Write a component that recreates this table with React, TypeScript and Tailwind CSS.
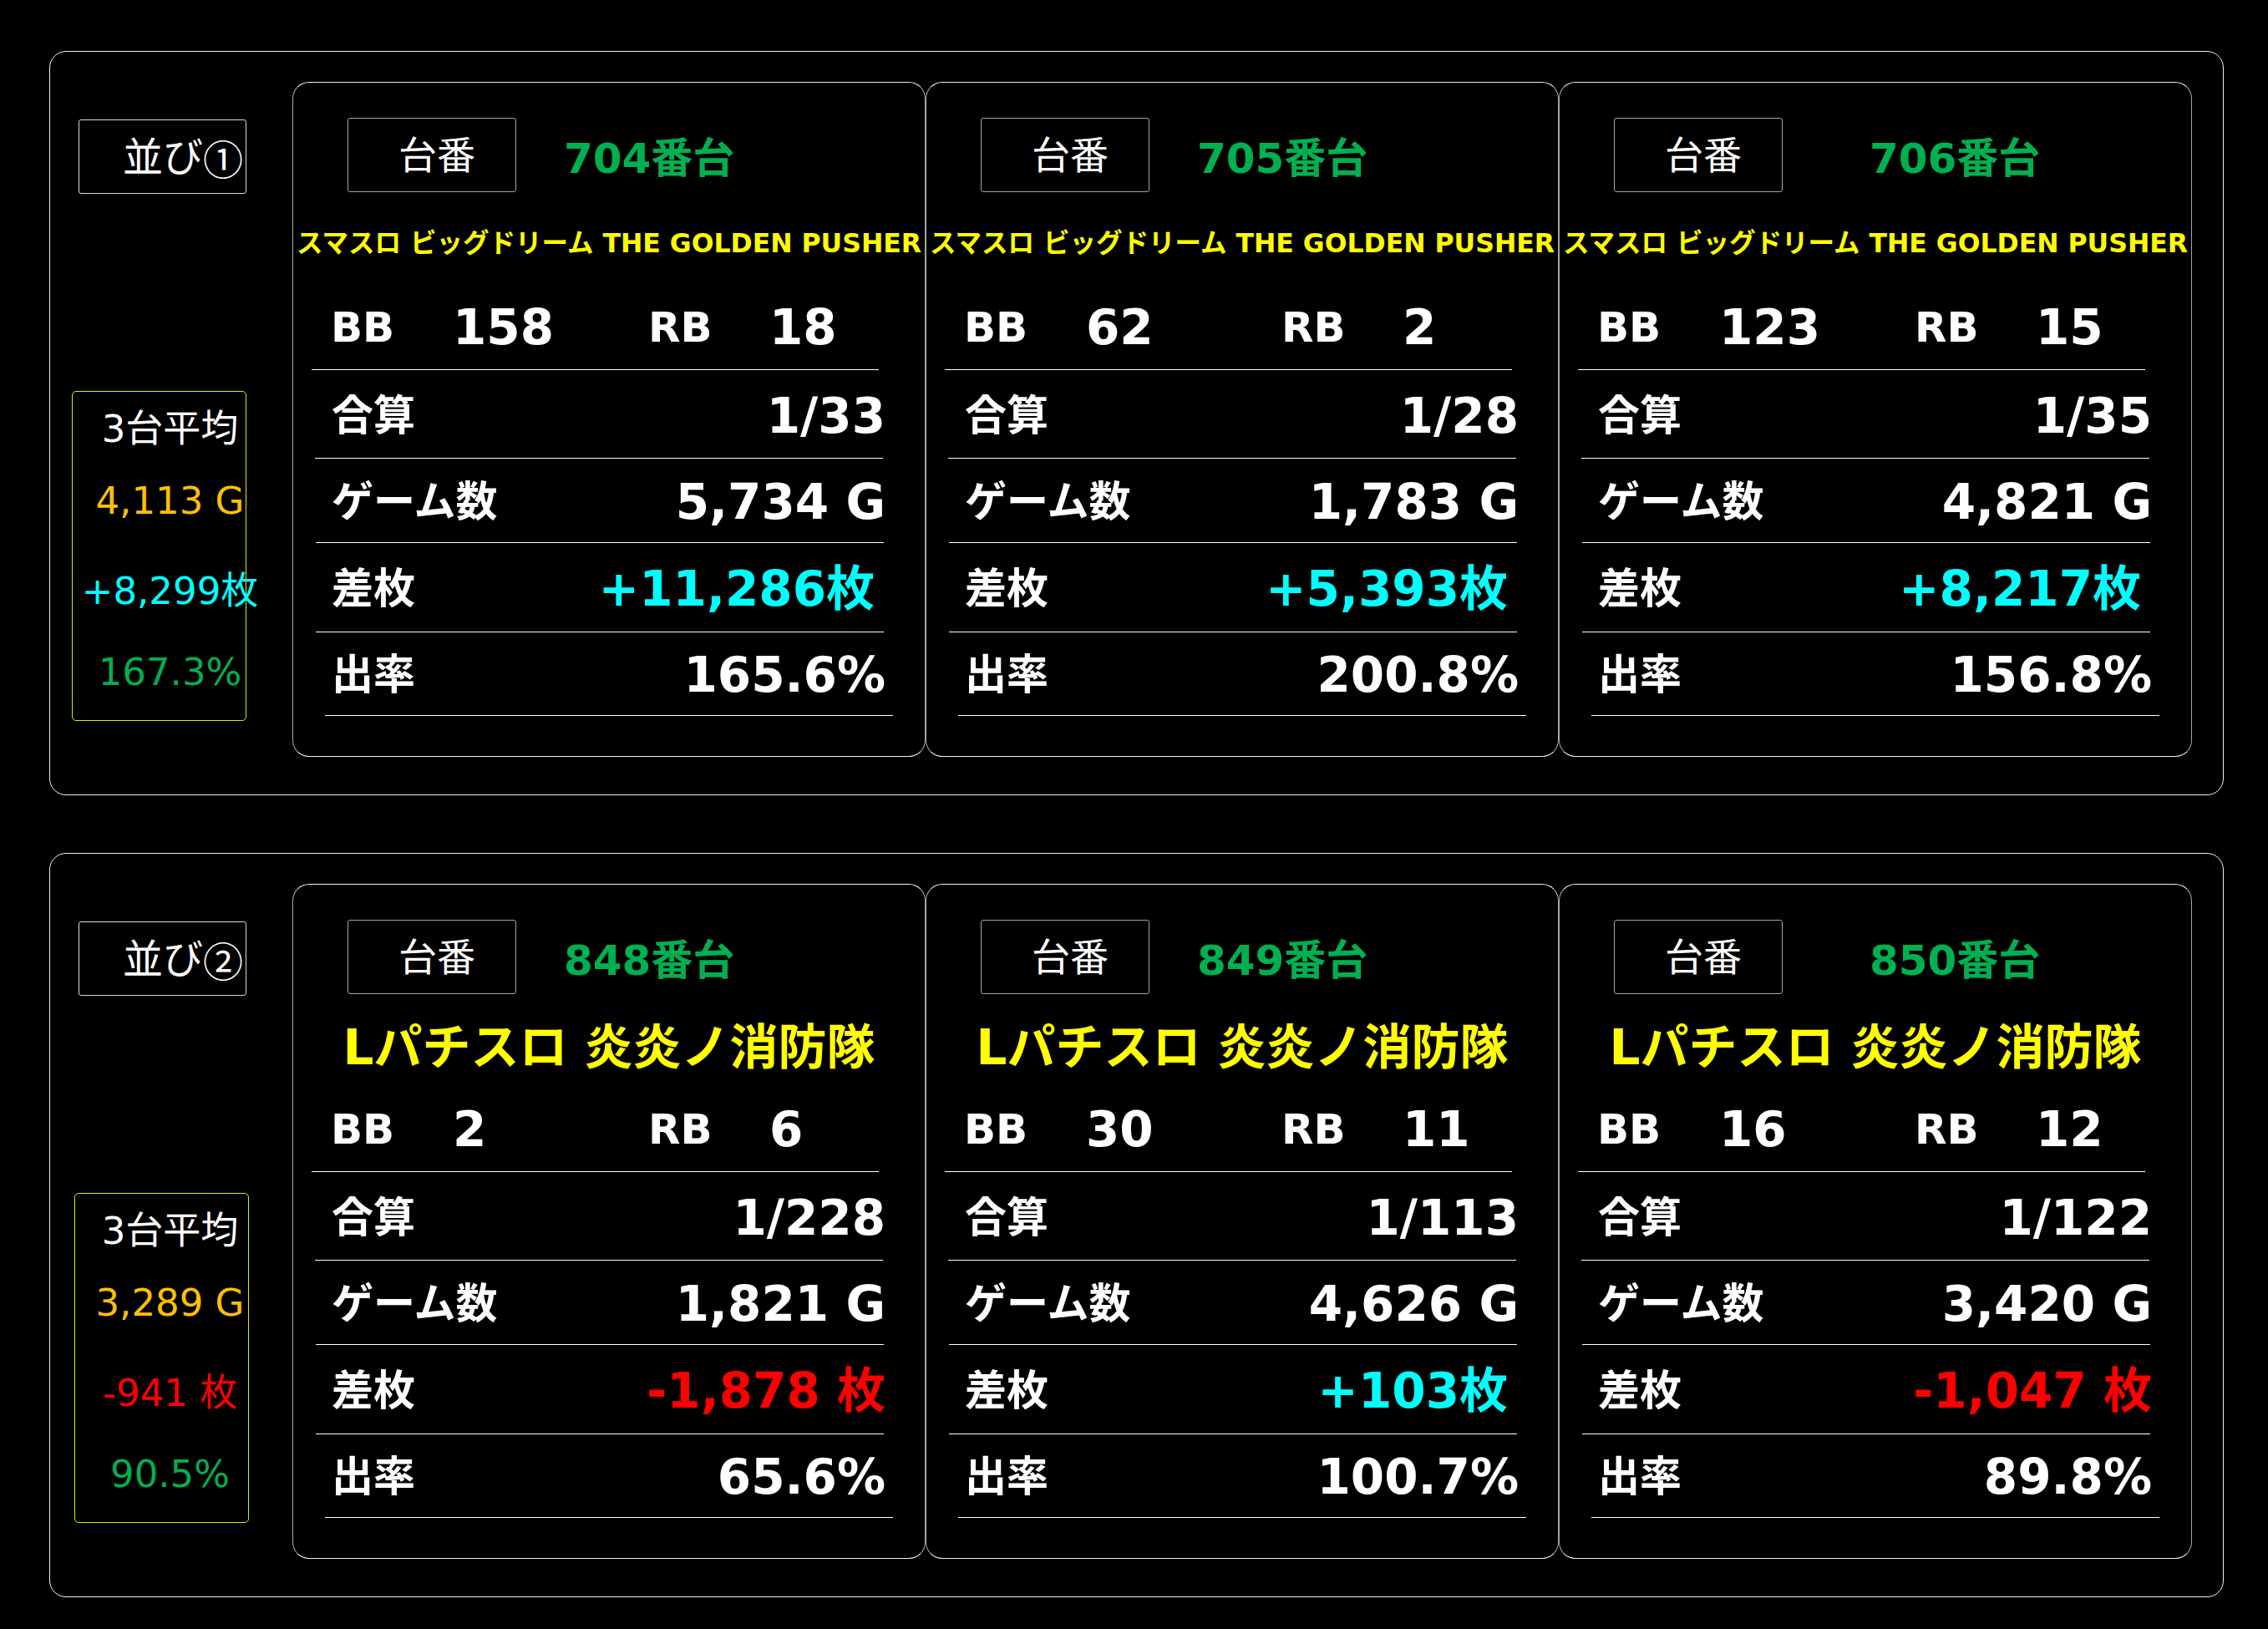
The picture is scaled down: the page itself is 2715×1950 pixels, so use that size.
import React from "react";

type Card = {
  no: string;
  bb: string;
  rb: string;
  total: string;
  games: string;
  diff: string;
  diffKind: "pos" | "neg";
  rate: string;
};

type Panel = {
  label: string;
  mark: string;
  title: string;
  big: boolean;
  avgGames: string;
  avgDiff: string;
  avgKind: "pos" | "neg";
  avgRate: string;
  avgShift: "a" | "b";
  cards: Card[];
};

const panels: Panel[] = [
  {
    label: "並び",
    mark: "①",
    title: "スマスロ ビッグドリーム THE GOLDEN PUSHER",
    big: false,
    avgGames: "4,113 G",
    avgDiff: "+8,299枚",
    avgKind: "pos",
    avgRate: "167.3%",
    avgShift: "a",
    cards: [
      { no: "704番台", bb: "158", rb: "18", total: "1/33", games: "5,734 G", diff: "+11,286枚", diffKind: "pos", rate: "165.6%" },
      { no: "705番台", bb: "62", rb: "2", total: "1/28", games: "1,783 G", diff: "+5,393枚", diffKind: "pos", rate: "200.8%" },
      { no: "706番台", bb: "123", rb: "15", total: "1/35", games: "4,821 G", diff: "+8,217枚", diffKind: "pos", rate: "156.8%" },
    ],
  },
  {
    label: "並び",
    mark: "②",
    title: "Lパチスロ 炎炎ノ消防隊",
    big: true,
    avgGames: "3,289 G",
    avgDiff: "-941 枚",
    avgKind: "neg",
    avgRate: "90.5%",
    avgShift: "b",
    cards: [
      { no: "848番台", bb: "2", rb: "6", total: "1/228", games: "1,821 G", diff: "-1,878 枚", diffKind: "neg", rate: "65.6%" },
      { no: "849番台", bb: "30", rb: "11", total: "1/113", games: "4,626 G", diff: "+103枚", diffKind: "pos", rate: "100.7%" },
      { no: "850番台", bb: "16", rb: "12", total: "1/122", games: "3,420 G", diff: "-1,047 枚", diffKind: "neg", rate: "89.8%" },
    ],
  },
];

function MachineCard({ card, title, big, index }: { card: Card; title: string; big: boolean; index: number }) {
  return (
    <div className="w-[758px] h-[808px] shrink-0 rounded-[20px] border border-[#a6a6a6] border-t-[#f2f2f2] border-b-[#f2f2f2] flex flex-col text-white">
      {/* header */}
      <div className="flex items-center mt-[42px]">
        <div className="ml-[65px] w-[202px] h-[89px] border border-[#a6a6a6] rounded-[3px] flex items-center pl-[60px] text-[46px] leading-none">
          台番
        </div>
        <div
          className={
            index === 2
              ? "ml-[104px] mt-[9px] text-[50px] font-bold leading-none text-[#00b050] whitespace-nowrap"
              : "ml-[57px] mt-[9px] text-[50px] font-bold leading-none text-[#00b050] whitespace-nowrap"
          }
        >
          {card.no}
        </div>
      </div>
      {/* title */}
      <div
        className={
          big
            ? "h-[121px] flex items-center justify-center pt-[7px] text-[58px] font-bold leading-none text-[#ffff00] whitespace-nowrap"
            : "h-[121px] flex items-center justify-center pt-[2px] text-[31.5px] font-bold leading-none text-[#ffff00] whitespace-nowrap"
        }
      >
        {title}
      </div>
      {/* BB / RB */}
      <div className="ml-[22px] w-[679px] h-[92px] border-b border-white flex items-center pb-[10px] pl-[23px] font-bold leading-none">
        <span className="w-[146px] text-[50px]">BB</span>
        <span className="w-[234px] text-[58px]">{card.bb}</span>
        <span className="w-[145px] text-[50px]">RB</span>
        <span className="text-[58px]">{card.rb}</span>
      </div>
      {/* 合算 */}
      <div className="ml-[26px] w-[680px] h-[106px] border-b border-white flex items-center justify-between pt-[4px] pl-[20px] font-bold leading-none">
        <span className="text-[50px]">合算</span>
        <span className="text-[58px] -mr-[3px]">{card.total}</span>
      </div>
      {/* ゲーム数 */}
      <div className="ml-[27px] w-[680px] h-[101px] border-b border-white flex items-center justify-between pt-[4px] pl-[19px] font-bold leading-none">
        <span className="text-[50px]">ゲーム数</span>
        <span className="text-[58px] -mr-[2px]">{card.games}</span>
      </div>
      {/* 差枚 */}
      <div className="ml-[27px] w-[680px] h-[107px] border-b border-white flex items-center justify-between pt-[4px] pl-[19px] font-bold leading-none">
        <span className="text-[50px]">差枚</span>
        {card.diffKind === "pos" ? (
          <span className="text-[58px] pr-[11px] text-[#00ffff]">{card.diff}</span>
        ) : (
          <span className="text-[58px] -mr-[2px] text-[#ff0000]">{card.diff}</span>
        )}
      </div>
      {/* 出率 */}
      <div className="ml-[38px] w-[680px] h-[100px] border-b border-white flex items-center justify-between pt-[2px] pl-[8px] pr-[9px] font-bold leading-none">
        <span className="text-[50px]">出率</span>
        <span className="text-[58px]">{card.rate}</span>
      </div>
    </div>
  );
}

function PanelView({ panel }: { panel: Panel }) {
  return (
    <div className="w-[2603px] h-[891px] shrink-0 rounded-[20px] border border-[#f0f0f0] flex">
      {/* left column */}
      <div className="w-[290px] shrink-0 flex flex-col">
        <div className="ml-[34px] mt-[81px] w-[201px] h-[89px] border border-[#d9d9d9] rounded-[3px] flex items-center pl-[52px] text-[48px] leading-none text-white whitespace-nowrap">
          <span>{panel.label}</span>
          <span className="font-['Noto_Sans_CJK_JP',sans-serif]">{panel.mark}</span>
        </div>
        <div
          className={
            panel.avgShift === "a"
              ? "ml-[26px] mt-[236px] w-[209px] h-[395px] border border-[#e6e600] rounded-[5px] flex flex-col pl-[26px] text-[45px] leading-none whitespace-nowrap"
              : "ml-[29px] mt-[236px] w-[209px] h-[395px] border border-[#e6e600] rounded-[5px] flex flex-col pl-[20px] text-[45px] leading-none whitespace-nowrap"
          }
        >
          <div className="h-[88px] flex items-center justify-center text-white">3台平均</div>
          <div className="h-[84px] flex items-center justify-center text-[#ffc000]">{panel.avgGames}</div>
          <div
            className={
              panel.avgKind === "pos"
                ? "h-[132px] flex items-center justify-center text-[#00ffff]"
                : "h-[132px] flex items-center justify-center text-[#ff0000]"
            }
          >
            {panel.avgDiff}
          </div>
          <div className="h-[62px] flex items-center justify-center text-[#00b050]">{panel.avgRate}</div>
        </div>
      </div>
      {/* cards */}
      <div className="flex mt-[36px] h-[808px]">
        {panel.cards.map((c, i) => (
          <MachineCard key={c.no} card={c} title={panel.title} big={panel.big} index={i} />
        ))}
      </div>
    </div>
  );
}

export default function App() {
  return (
    <div className="w-[2715px] h-[1950px] bg-black pt-[61px] pl-[59px] flex flex-col gap-[69px] font-['DejaVu_Sans','Noto_Sans_CJK_JP',sans-serif] text-white overflow-hidden">
      {panels.map((p) => (
        <PanelView key={p.mark} panel={p} />
      ))}
    </div>
  );
}
